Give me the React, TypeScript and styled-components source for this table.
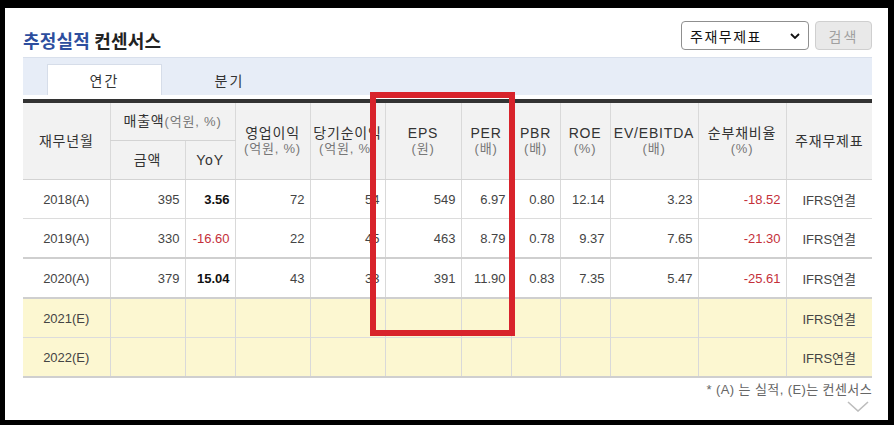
import React from 'react';
import styled, { createGlobalStyle } from 'styled-components';

const GlobalStyle = createGlobalStyle`
  html, body {
    margin: 0;
    padding: 0;
    background: #000;
  }
  body {
    font-family: "Liberation Sans", "Noto Sans CJK KR", sans-serif;
    color: #333;
  }
`;

type Row = {
  period: string;
  values: string[];
  estimate?: boolean;
  thick?: boolean;
};

const COLS = [87, 75, 50, 75, 75, 76, 50, 49, 50, 88, 88, 86];

const ROWS: Row[] = [
  { period: '2018(A)', values: ['395', '3.56', '72', '54', '549', '6.97', '0.80', '12.14', '3.23', '-18.52'] },
  { period: '2019(A)', values: ['330', '-16.60', '22', '45', '463', '8.79', '0.78', '9.37', '7.65', '-21.30'], thick: true },
  { period: '2020(A)', values: ['379', '15.04', '43', '33', '391', '11.90', '0.83', '7.35', '5.47', '-25.61'], thick: true },
  { period: '2021(E)', values: ['', '', '', '', '', '', '', '', '', ''], estimate: true },
  { period: '2022(E)', values: ['', '', '', '', '', '', '', '', '', ''], estimate: true, thick: true }
];

const Frame = styled.div`
  position: relative;
  box-sizing: border-box;
  margin: 8px 6px 0 5px;
  height: 412px;
  background: #fff;
  padding: 13px 16px 0 18px;
`;

const TopBar = styled.div`
  display: flex;
  align-items: flex-end;
  justify-content: space-between;
  height: 29px;
`;

const Title = styled.h2`
  margin: 0;
  font-size: 18px;
  line-height: 20px;
  font-weight: 700;
  color: #222;
  font-family: "Noto Sans CJK KR", sans-serif;
  letter-spacing: 0.2px;

  em {
    font-style: normal;
    color: #2d4e9e;
  }
`;

const Controls = styled.div`
  display: flex;
  gap: 6px;
  height: 29px;
`;

const Select = styled.div`
  box-sizing: border-box;
  width: 128px;
  height: 29px;
  display: flex;
  align-items: center;
  justify-content: space-between;
  padding: 0 8px 0 8px;
  border: 1px solid #8f8f8f;
  border-radius: 4px;
  background: #fff;
  font-size: 14px;
  color: #111;
  letter-spacing: 1.5px;
`;

const SearchButton = styled.button`
  box-sizing: border-box;
  width: 57px;
  height: 29px;
  border: 1px solid #cfcfcf;
  border-radius: 4px;
  background: #e9e9e9;
  color: #a0a0a0;
  font-family: "Noto Sans CJK KR", sans-serif;
  font-size: 14px;
  letter-spacing: 2px;
  padding: 0;
`;

const TabBar = styled.div`
  box-sizing: border-box;
  margin-top: 7px;
  height: 38px;
  display: flex;
  align-items: flex-end;
  gap: 10px;
  padding-left: 24px;
  background: #e7edf7;
  border-top: 1px solid #d9e0ec;
`;

const Tab = styled.div<{ $active?: boolean }>`
  box-sizing: border-box;
  width: 115px;
  height: 31px;
  display: flex;
  align-items: center;
  justify-content: center;
  font-size: 14px;
  letter-spacing: 2px;
  color: #333;
  background: ${p => (p.$active ? '#fff' : 'transparent')};
  border: 1px solid ${p => (p.$active ? '#d6dde9' : 'transparent')};
  border-bottom: none;
`;

const Table = styled.table`
  margin-top: 4px;
  width: 849px;
  table-layout: fixed;
  border-collapse: collapse;
  border-top: 4px solid #333;
  font-size: 13px;
`;

const Th = styled.th<{ $first?: boolean; $sub?: boolean }>`
  height: 37px;
  padding: 0;
  font-weight: 400;
  font-size: 14px;
  line-height: 16px;
  letter-spacing: 0.8px;
  color: #333;
  background: #f2f2f2;
  border-left: ${p => (p.$first ? 'none' : '1px solid #d9d9d9')};
  border-bottom: 1px solid #d3d3d3;
  text-align: center;
  vertical-align: middle;
  white-space: nowrap;
  overflow: hidden;
  ${p => (p.$sub ? 'height: 38px;' : '')}

  small {
    display: block;
    font-size: 13px;
    color: #777;
  }
`;

const Unit = styled.span`
  font-size: 13px;
  color: #777;
`;

const Tr = styled.tr<{ $estimate?: boolean; $thick?: boolean }>`
  background: ${p => (p.$estimate ? '#fcf7d1' : '#fff')};
  border-bottom: ${p => (p.$thick ? '2px solid #cfcfcf' : '1px solid #dcdcdc')};
`;

const Td = styled.td<{ $align?: 'center' | 'right'; $tone?: 'neg' | 'strong'; $first?: boolean }>`
  height: 38px;
  padding: 0 5px 0 0;
  text-align: ${p => p.$align ?? 'right'};
  color: ${p => (p.$tone === 'neg' ? '#c4303a' : p.$tone === 'strong' ? '#111' : '#444')};
  font-weight: ${p => (p.$tone === 'strong' ? 700 : 400)};
  border-left: ${p => (p.$first ? 'none' : '1px solid #d9d9d9')};
  ${p => (p.$align === 'center' ? 'padding: 0;' : '')}
`;

const Highlight = styled.div`
  position: absolute;
  left: 365px;
  top: 84px;
  width: 145px;
  height: 244px;
  box-sizing: border-box;
  border: 6px solid #d8232b;
  pointer-events: none;
`;

const Note = styled.p`
  margin: 1px 0 0;
  text-align: right;
  font-size: 13px;
  letter-spacing: 0.4px;
  color: #666;
`;

const More = styled.div`
  display: flex;
  justify-content: flex-end;
  padding-right: 3px;
  margin-top: 3px;
`;

const Chevron = () => (
  <svg width='10' height='6' viewBox='0 0 10 6'>
    <path d='M1 1l4 4 4-4' fill='none' stroke='#111' strokeWidth='1.8' />
  </svg>
);

const tone = (v: string, col: number): 'neg' | 'strong' | undefined => {
  if (v.startsWith('-')) return 'neg';
  if (col === 1 && v) return 'strong';
  return undefined;
};

const App: React.FC = () => (
  <>
    <GlobalStyle />
    <Frame>
      <TopBar>
        <Title>
          <em>추정실적</em> 컨센서스
        </Title>
        <Controls>
          <Select>
            <span>주재무제표</span>
            <Chevron />
          </Select>
          <SearchButton>검색</SearchButton>
        </Controls>
      </TopBar>
      <TabBar>
        <Tab $active>연간</Tab>
        <Tab>분기</Tab>
      </TabBar>
      <Table>
        <colgroup>
          {COLS.map((w, i) => (
            <col key={i} style={{ width: w }} />
          ))}
        </colgroup>
        <thead>
          <tr>
            <Th $first rowSpan={2}>재무년월</Th>
            <Th colSpan={2}>매출액<Unit>(억원, %)</Unit></Th>
            <Th rowSpan={2}>영업이익<small>(억원, %)</small></Th>
            <Th rowSpan={2}>당기순이익<small>(억원, %)</small></Th>
            <Th rowSpan={2}>EPS<small>(원)</small></Th>
            <Th rowSpan={2}>PER<small>(배)</small></Th>
            <Th rowSpan={2}>PBR<small>(배)</small></Th>
            <Th rowSpan={2}>ROE<small>(%)</small></Th>
            <Th rowSpan={2}>EV/EBITDA<small>(배)</small></Th>
            <Th rowSpan={2}>순부채비율<small>(%)</small></Th>
            <Th rowSpan={2}>주재무제표</Th>
          </tr>
          <tr>
            <Th $sub>금액</Th>
            <Th $sub>YoY</Th>
          </tr>
        </thead>
        <tbody>
          {ROWS.map(r => (
            <Tr key={r.period} $estimate={r.estimate} $thick={r.thick}>
              <Td $first $align='center'>{r.period}</Td>
              {r.values.map((v, i) => (
                <Td key={i} $tone={tone(v, i)}>{v}</Td>
              ))}
              <Td $align='center'>IFRS연결</Td>
            </Tr>
          ))}
        </tbody>
      </Table>
      <Note>* (A) 는 실적, (E)는 컨센서스</Note>
      <More>
        <svg width='22' height='11' viewBox='0 0 22 11'>
          <path d='M1 1l10 9 10-9' fill='none' stroke='#bdbdbd' strokeWidth='1.6' />
        </svg>
      </More>
      <Highlight />
    </Frame>
  </>
);

export default App;
